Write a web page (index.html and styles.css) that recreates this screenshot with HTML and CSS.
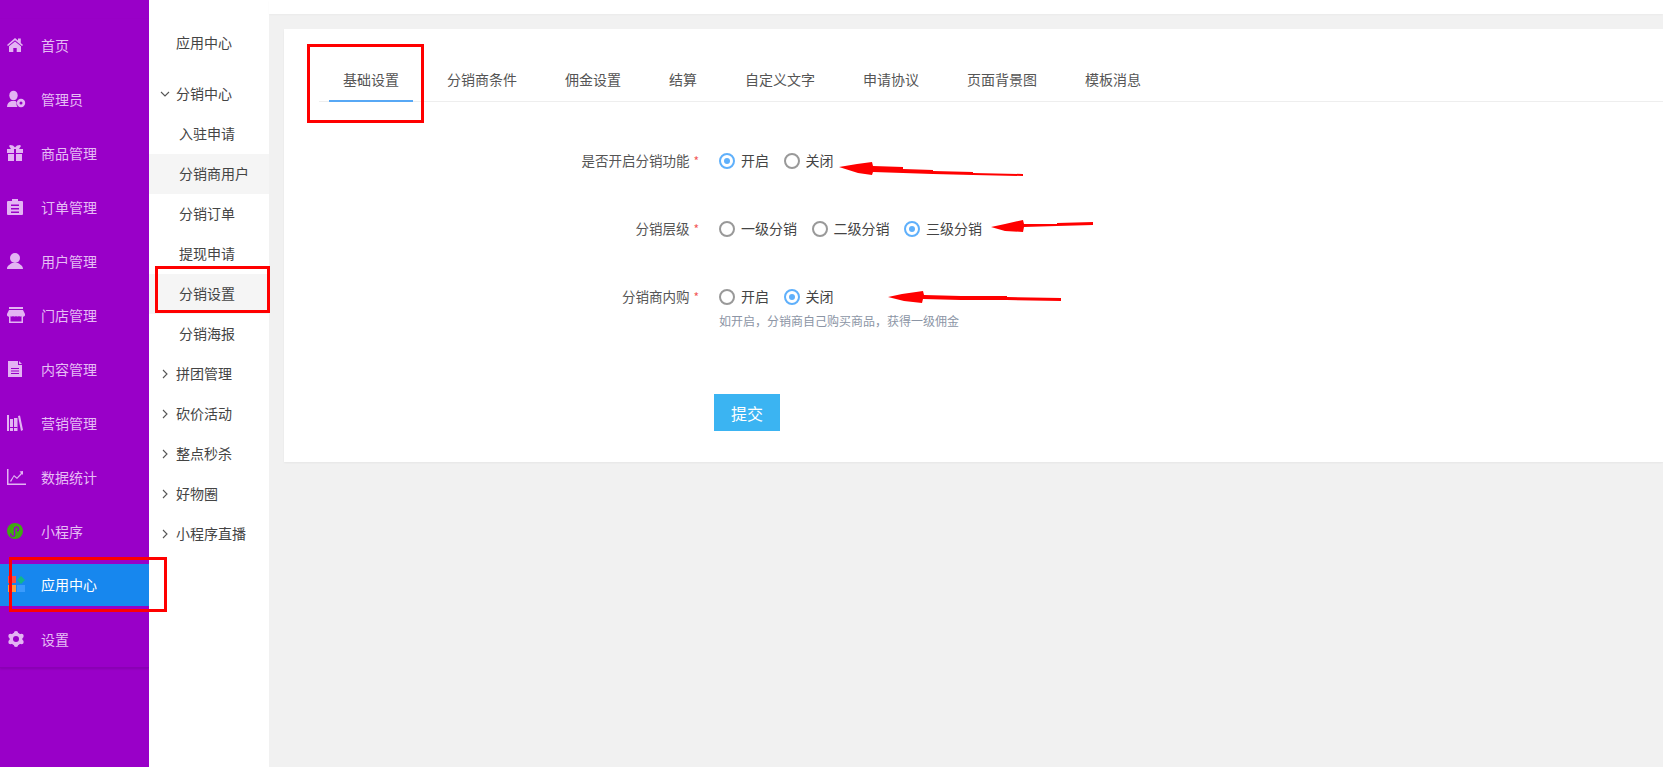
FILE: index.html
```html
<!DOCTYPE html>
<html lang="zh-CN">
<head>
<meta charset="utf-8">
<title>分销设置</title>
<link rel="stylesheet" href="styles.css">
</head>
<body>
<div class="app">
  <nav class="side">
    <ul class="nav">
      <li class="nav-item"><a class="nav-link"><svg class="ico" viewBox="0 0 20 20"><path d="M8 2 L11 4.6V2.500h2.800v4.500L16 9l-1 1.100L8 4.200 1 10.100 0 9z"/><path d="M2 10.300 8 5.400l6 4.900V16H9.700v-4H6.300v4H2z"/></svg><span>首页</span></a></li>
      <li class="nav-item"><a class="nav-link"><svg class="ico" viewBox="0 0 20 20"><ellipse cx="6.500" cy="5.500" rx="4.200" ry="4.800"/><path d="M0 17c0-3.500 2-5 4.500-6h4c.5.500 1 1 1.200 1.500A5 5 0 0 0 10.500 17z"/><circle cx="14" cy="13" r="4.200"/><circle class="hole" cx="14" cy="13" r="1.500"/></svg><span>管理员</span></a></li>
      <li class="nav-item"><a class="nav-link"><svg class="ico" viewBox="0 0 20 20"><path d="M3 1l3 .5 2 2 2-2 3-.5 1 1-2 3H4L2 2z"/><path d="M0 5h7v4H0zM9 5h7v4H9zM1 10h6v7H1zM9 10h6v7H9z"/></svg><span>商品管理</span></a></li>
      <li class="nav-item"><a class="nav-link"><svg class="ico" viewBox="0 0 20 20"><path d="M1 3h4V1h6v2h4a1 1 0 0 1 1 1v12a1 1 0 0 1-1 1H1a1 1 0 0 1-1-1V4a1 1 0 0 1 1-1z"/><path class="hole" d="M4 6.500h8V8H4zM4 10h8v1.500H4zM4 13.500h8V15H4z"/></svg><span>订单管理</span></a></li>
      <li class="nav-item"><a class="nav-link"><svg class="ico" viewBox="0 0 20 20"><circle cx="8" cy="6" r="5"/><path d="M0 17c0-3.500 3-4.500 5-6h6c2 1.500 5 2.500 5 6z"/></svg><span>用户管理</span></a></li>
      <li class="nav-item"><a class="nav-link"><svg class="ico" viewBox="0 0 20 20"><path d="M2 1h14v2H2zM2 4h14l2 4v1.500a2 2 0 0 1-3 .5 2.500 2.500 0 0 1-3 0 2.500 2.500 0 0 1-3 0 2.500 2.500 0 0 1-3 0 2.500 2.500 0 0 1-3 0 2 2 0 0 1-3-.5V8z"/><path d="M2 10h1.500v5.500h11V10H16v7H2z"/></svg><span>门店管理</span></a></li>
      <li class="nav-item"><a class="nav-link"><svg class="ico" viewBox="0 0 20 20"><path d="M1 1h10v4h4v12H1z"/><path d="M12 1l3 3h-3z"/><path class="hole" d="M4 8h8v1H4zM4 10.500h8v1H4zM4 13h8v1H4z"/></svg><span>内容管理</span></a></li>
      <li class="nav-item"><a class="nav-link"><svg class="ico" viewBox="0 0 20 20"><path d="M0 1h2v16H0zM3 5h3v12H3zM7 4h3.500v13H7zM11 2l2-.5L16 16l-2 1z"/><path class="hole" d="M3 13h3v1H3zM7 13h3.500v1H7z"/></svg><span>营销管理</span></a></li>
      <li class="nav-item"><a class="nav-link"><svg class="ico" viewBox="0 0 20 20"><path d="M0 1h1.500v14.500H19V17H0z"/><path d="M3 13l4-6 3 2.500L14 5l-1.500-1.500L16 3v4l-1-1-5 5-3-2.500L4 14z"/></svg><span>数据统计</span></a></li>
      <li class="nav-item"><a class="nav-link"><svg class="ico" viewBox="0 0 20 20"><circle class="mini" cx="8" cy="9" r="8"/><path class="mini-line" d="M4 11.500a2 2 0 1 0 3.500 0V7a2 2 0 1 1 2.500 2"/></svg><span>小程序</span></a></li>
      <li class="nav-item is-active"><a class="nav-link"><svg class="ico" viewBox="0 0 20 20"><path class="c-red" d="M1 1h8v7H1z"/><path class="c-green" d="M14 1l4 4-4 4-4-4z"/><path class="c-orange" d="M1 10h8v7H1z"/><path class="c-blue" d="M10 10h8v7h-8z"/></svg><span>应用中心</span></a></li>
      <li class="nav-item"><a class="nav-link"><svg class="ico" viewBox="0 0 20 20"><circle cx="9" cy="9" r="6.500"/><circle cx="9" cy="3.200" r="2.200"/><circle cx="9" cy="14.800" r="2.200"/><circle cx="3.500" cy="6" r="2.200"/><circle cx="14.500" cy="6" r="2.200"/><circle cx="3.500" cy="12" r="2.200"/><circle cx="14.500" cy="12" r="2.200"/><circle class="hole" cx="9" cy="9" r="3"/></svg><span>设置</span></a></li>
    </ul>
  </nav>

  <aside class="sub">
    <div class="sub-title">应用中心</div>
    <div class="sub-group"><svg class="chev" viewBox="0 0 10 10"><path d="M1 3l4 4 4-4"/></svg>分销中心</div>
    <div class="sub-link">入驻申请</div>
    <div class="sub-link is-hover">分销商用户</div>
    <div class="sub-link">分销订单</div>
    <div class="sub-link">提现申请</div>
    <div class="sub-link is-hover">分销设置</div>
    <div class="sub-link">分销海报</div>
    <div class="sub-group"><svg class="chev" viewBox="0 0 10 10"><path d="M3 1l4 4-4 4"/></svg>拼团管理</div>
    <div class="sub-group"><svg class="chev" viewBox="0 0 10 10"><path d="M3 1l4 4-4 4"/></svg>砍价活动</div>
    <div class="sub-group"><svg class="chev" viewBox="0 0 10 10"><path d="M3 1l4 4-4 4"/></svg>整点秒杀</div>
    <div class="sub-group"><svg class="chev" viewBox="0 0 10 10"><path d="M3 1l4 4-4 4"/></svg>好物圈</div>
    <div class="sub-group"><svg class="chev" viewBox="0 0 10 10"><path d="M3 1l4 4-4 4"/></svg>小程序直播</div>
  </aside>

  <main class="main">
    <div class="topbar"></div>
    <div class="content">
      <section class="card">
        <div class="tabs">
          <a class="tab is-active">基础设置</a>
          <a class="tab">分销商条件</a>
          <a class="tab">佣金设置</a>
          <a class="tab">结算</a>
          <a class="tab">自定义文字</a>
          <a class="tab">申请协议</a>
          <a class="tab">页面背景图</a>
          <a class="tab">模板消息</a>
        </div>
        <form class="form">
          <div class="row">
            <div class="label">是否开启分销功能<i>*</i></div>
            <div class="control">
              <label class="opt"><span class="radio is-on"></span><span class="opt-text">开启</span></label>
              <label class="opt"><span class="radio"></span><span class="opt-text">关闭</span></label>
            </div>
          </div>
          <div class="row">
            <div class="label">分销层级<i>*</i></div>
            <div class="control">
              <label class="opt"><span class="radio"></span><span class="opt-text">一级分销</span></label>
              <label class="opt"><span class="radio"></span><span class="opt-text">二级分销</span></label>
              <label class="opt"><span class="radio is-on"></span><span class="opt-text">三级分销</span></label>
            </div>
          </div>
          <div class="row">
            <div class="label">分销商内购<i>*</i></div>
            <div class="control">
              <label class="opt"><span class="radio"></span><span class="opt-text">开启</span></label>
              <label class="opt"><span class="radio is-on"></span><span class="opt-text">关闭</span></label>
            </div>
          </div>
          <p class="help">如开启，分销商自己购买商品，获得一级佣金</p>
          <div class="actions"><button class="submit" type="button">提交</button></div>
        </form>
      </section>
    </div>
  </main>
</div>

<div class="mark mark-tab"></div>
<div class="mark mark-sub"></div>
<div class="mark mark-nav"></div>
<svg class="arrows" viewBox="0 0 1663 767">
  <path d="M839 167l18-3 15-2 1 4 30 1v2l30 1v1l40 1v1l50 1v2l-50-1-40-1-30-1-30-1-1 3-14-2z"/>
  <path d="M991 227l14-3 18-4 1 4 33 0v-1l36-1v3l-36 1-33 1-1 5-18-1z"/>
  <path d="M888 297l14-3 21-3 1 4 37 1h46v1l54 1v3l-54-1h-46l-38-1-1 4-18-2z"/>
</svg>
</body>
</html>
```

FILE: styles.css
```css
* { box-sizing: border-box; }
html, body { margin: 0; height: 100%; overflow: hidden; }
body {
  position: relative;
  font-family: "Noto Sans CJK SC", "Liberation Sans", sans-serif;
  font-size: 14px;
  color: #444;
  background: #f1f1f1;
}
.app { display: flex; height: 767px; }

/* primary nav */
.side { width: 149px; flex: none; background: #9900c8; padding-top: 19px; }
.nav { list-style: none; margin: 0; padding: 0; border-bottom: 1px solid #8a00b4; box-shadow: 0 1px 2px rgba(90,0,120,.3); }
.nav-item { height: 54px; padding: 6px 0; }
.nav-item.is-active { padding: 5px 0 7px; }
.nav-link { display: flex; align-items: center; height: 42px; padding-left: 7px; gap: 14px; color: #e6bdf5; line-height: 20px; }
.nav-link span { padding-bottom: 2px; }
.ico { width: 20px; height: 20px; flex: none; fill: #e3b4f3; }
.hole { fill: #9900c8; }
.mini { fill: #3fa912; }
.mini-line { fill: none; stroke: #9900c8; stroke-width: 1.500; }
.c-red { fill: #f2504b; }
.c-green { fill: #12b886; }
.c-orange { fill: #ff9a3c; }
.c-blue { fill: #3a9bfc; }
.is-active .nav-link { background: #1787ee; color: #fff; }

/* secondary nav */
.sub { width: 120px; flex: none; background: #fff; padding-top: 14px; }
.sub-title { height: 60px; line-height: 57px; padding-left: 27px; color: #444; }
.sub-group { display: flex; align-items: center; height: 40px; padding: 0 0 2px 11px; gap: 6px; color: #444; }
.chev { width: 10px; height: 10px; flex: none; margin-top: 2px; fill: none; stroke: #555; stroke-width: 1.100; }
.sub-link { height: 40px; line-height: 38px; padding-left: 30px; color: #444; }
.is-hover { background: #f5f5f5; }

/* main */
.main { flex: 1; min-width: 0; }
.topbar { height: 14px; background: #fff; box-shadow: 0 1px 2px rgba(0,0,0,.03); }
.content { padding: 15px 0 0 15px; }
.card { height: 433px; background: #fff; box-shadow: 0 1px 2px rgba(0,0,0,.05); padding-top: 40px; }

.tabs { display: flex; gap: 20px; margin-left: 35px; padding-left: 10px; height: 33px; border-bottom: 1px solid #eee; }
.tab { height: 33px; padding: 0 14px; line-height: 20px; color: #555; border-bottom: 2px solid transparent; }
.tab.is-active { border-bottom-color: #57a8f5; }

.form { padding-top: 43px; }
.row { display: flex; height: 32px; margin-bottom: 36px; line-height: 30px; }
.row:nth-child(3) { margin-bottom: 0; }
.label { width: 415px; text-align: right; color: #555; font-size: 13.500px; }
.label i { font-style: normal; color: #f25a5a; margin-left: 4px; font-size: 12px; }
.control { display: flex; gap: 14.500px; margin-left: 20px; color: #444; }
.opt { display: flex; align-items: center; gap: 6px; }
.opt-text { padding-bottom: 2px; }
.radio { position: relative; width: 16px; height: 16px; border: 2px solid #999; border-radius: 50%; background: #fff; }
.radio.is-on { border-color: #5fb0fb; }
.radio.is-on::after { content: ""; position: absolute; left: 3px; top: 3px; width: 6px; height: 6px; border-radius: 50%; background: #5fb0fb; }
.help { margin: -1px 0 0 435px; font-size: 12px; line-height: 18px; color: #8c95a5; }
.actions { padding: 64px 0 0 430px; }
.submit { width: 66px; height: 37px; border: 0; padding: 0; background: #3bb4f2; color: #fff; font: inherit; font-size: 16px; }

/* annotations drawn over the screenshot */
.mark { position: absolute; border: 3px solid #f00; }
.mark-tab { left: 307px; top: 44px; width: 117px; height: 79px; }
.mark-sub { left: 155px; top: 266px; width: 115px; height: 47px; }
.mark-nav { left: 9px; top: 557px; width: 158px; height: 55px; }
.arrows { position: absolute; left: 0; top: 0; width: 1663px; height: 767px; fill: #f00; pointer-events: none; }
```
